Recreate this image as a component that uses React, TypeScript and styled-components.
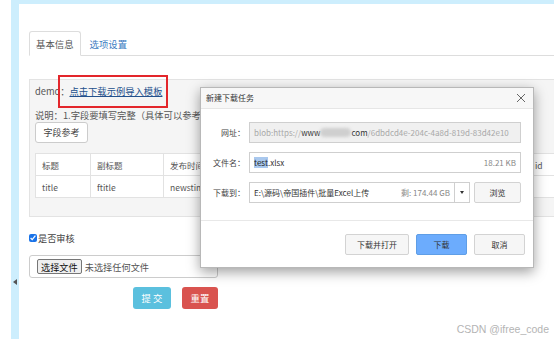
import React from "react";
import styled, { createGlobalStyle } from "styled-components";

const GlobalStyle = createGlobalStyle`
  html, body {
    margin: 0;
    padding: 0;
    background: #fff;
    overflow: hidden;
  }
  body {
    font-family: "Noto Sans CJK SC", "Noto Sans", "Liberation Sans", sans-serif;
    color: #555;
  }
`;

const cjk = `"Noto Sans CJK SC", "Noto Sans", "Liberation Sans", sans-serif`;

const Page = styled.div`
  position: relative;
  width: 554px;
  height: 339px;
  overflow: hidden;
  padding-left: 11px;
  box-sizing: border-box;
  display: flex;
`;

const Frame = styled.div`
  position: relative;
  flex: 1;
  display: flex;
  min-width: 0;
  background: #cdeefd;
  padding: 4px 0 0 8px;
`;

const Toggle = styled.span`
  position: absolute;
  left: 2px;
  top: 279px;
  width: 0;
  height: 0;
  border-top: 3px solid transparent;
  border-bottom: 3px solid transparent;
  border-right: 4px solid #555;
`;

const Content = styled.main`
  flex: 1;
  min-width: 0;
  background: #fff;
  padding: 27px 0 0 10px;
`;

const Tabs = styled.div`
  display: flex;
  height: 24px;
  border-bottom: 1px solid #ddd;
  margin-right: -40px;
`;

const Tab = styled.div<{ $active?: boolean }>`
  height: 25px;
  line-height: 24px;
  padding: 0 6px;
  margin-right: 2px;
  font-size: 9.4px;
  color: ${(p) => (p.$active ? "#555" : "#3a7bbf")};
  border: 1px solid ${(p) => (p.$active ? "#ddd" : "transparent")};
  border-bottom-color: ${(p) => (p.$active ? "#fff" : "transparent")};
  border-radius: 3px 3px 0 0;
  background: ${(p) => (p.$active ? "#fff" : "transparent")};
  box-sizing: border-box;
`;

const Panel = styled.section`
  margin-top: 23px;
  margin-right: -60px;
  background: #f5f5f5;
  border: 1px solid #e3e3e3;
  padding: 0 5px 18px;
`;

const DemoLine = styled.div`
  line-height: 22px;
  font-size: 9.3px;
  color: #555;
`;

const DemoLink = styled.a`
  position: relative;
  color: #23508c;
  text-decoration: underline;
  &::after {
    content: "";
    position: absolute;
    left: -11px;
    right: -6px;
    top: -9px;
    bottom: -10px;
    border: 2px solid #e3262b;
  }
`;

const Note = styled.div`
  margin-top: 6px;
  line-height: 14px;
  font-size: 9.3px;
  white-space: nowrap;
`;

const PlainButton = styled.button`
  display: block;
  width: 53px;
  height: 21px;
  padding: 0;
  border: 1px solid #ccc;
  border-radius: 3px;
  background: #fff;
  color: #444;
  font-family: ${cjk};
  font-size: 9px;
`;

const Table = styled.table`
  margin-top: 10px;
  border-collapse: collapse;
  background: #fff;
  table-layout: fixed;
`;

const Cell = styled.td<{ $w?: number }>`
  width: ${(p) => (p.$w ? `${p.$w}px` : "auto")};
  height: 22px;
  padding: 0 6px;
  border: 1px solid #e2e2e2;
  font-size: 8.5px;
  color: #555;
  white-space: nowrap;
  overflow: hidden;
  box-sizing: border-box;
`;

const CheckRow = styled.label`
  display: flex;
  align-items: center;
  margin-top: 13px;
  height: 16px;
  font-size: 9.2px;
  color: #444;
`;

const Check = styled.input`
  width: 8px;
  height: 8px;
  margin: 0 1px 0 0;
  accent-color: #1a73e8;
`;

const FileBox = styled.div`
  margin-top: 9px;
  width: 189px;
  height: 23px;
  box-sizing: border-box;
  border: 1px solid #ccc;
  border-radius: 3px;
  background: #fff;
  display: flex;
  align-items: center;
  padding-left: 7px;
  gap: 3px;
  font-size: 9.2px;
  color: #555;
`;

const FileButton = styled.span`
  height: 15px;
  line-height: 14px;
  padding: 0 3px;
  box-sizing: border-box;
  border: 1px solid #767676;
  border-radius: 2px;
  background: #efefef;
  color: #111;
`;

const Actions = styled.div`
  display: flex;
  gap: 11px;
  margin-top: 9px;
  padding-left: 104px;
`;

const SolidButton = styled.button<{ $bg: string; $w: number }>`
  height: 22px;
  width: ${(p) => p.$w}px;
  padding: 0;
  border: none;
  border-radius: 3px;
  background: ${(p) => p.$bg};
  color: #fff;
  font-family: ${cjk};
  font-size: 9.4px;
`;

/* download dialog */
const Dialog = styled.div`
  position: absolute;
  left: 200px;
  top: 87px;
  width: 334px;
  height: 181px;
  box-sizing: border-box;
  background: #fff;
  border: 1px solid #b8b8b8;
  box-shadow: 0 4px 12px rgba(0, 0, 0, 0.38);
  display: flex;
  flex-direction: column;
  font-size: 8px;
  color: #333;
`;

const TitleBar = styled.div`
  position: relative;
  height: 21px;
  line-height: 20px;
  padding-left: 5px;
  box-sizing: border-box;
  background: #f7f7f7;
  border-bottom: 1px solid #e6e6e6;
  color: #333;
`;

const Close = styled.svg`
  position: absolute;
  right: 7px;
  top: 5px;
`;

const DialogBody = styled.div`
  display: flex;
  flex-direction: column;
  gap: 9px;
  padding: 13px 12px 0 0;
`;

const Row = styled.div`
  display: flex;
  align-items: center;
  height: 21px;
`;

const Label = styled.span`
  width: 44px;
  text-align: right;
  margin-right: 4px;
  color: #444;
`;

const Field = styled.div<{ $disabled?: boolean }>`
  flex: 1;
  min-width: 0;
  height: 21px;
  box-sizing: border-box;
  border: 1px solid #cfcfcf;
  background: ${(p) => (p.$disabled ? "#f0f0f0" : "#fff")};
  display: flex;
  align-items: center;
  padding: 0 4px;
  white-space: nowrap;
  overflow: hidden;
`;

const Muted = styled.span`
  color: #a8a8a8;
`;

const Dark = styled.span`
  color: #333;
`;

const Blur = styled.span`
  display: inline-block;
  width: 31px;
  height: 9px;
  border-radius: 5px;
  background: #cfcfcf;
  filter: blur(1.5px);
`;

const Selected = styled.span`
  background: #a9c8ee;
  color: #222;
`;

const Side = styled.span`
  margin-left: auto;
  color: #888;
`;

const Drop = styled.div`
  width: 15px;
  height: 21px;
  box-sizing: border-box;
  border: 1px solid #cfcfcf;
  border-left: none;
  margin-right: 4px;
  display: flex;
  align-items: center;
  justify-content: center;
  &::before {
    content: "";
    border-left: 2.5px solid transparent;
    border-right: 2.5px solid transparent;
    border-top: 3px solid #333;
  }
`;

const GreyButton = styled.button<{ $w: number; $primary?: boolean }>`
  width: ${(p) => p.$w}px;
  height: 21px;
  padding: 0;
  box-sizing: border-box;
  border: 1px solid ${(p) => (p.$primary ? "#5f9ee6" : "#d3d3d3")};
  border-radius: 2px;
  background: ${(p) => (p.$primary ? "#6cacfd" : "#f6f6f6")};
  color: #333;
  font-family: ${cjk};
  font-size: 8px;
`;

const Footer = styled.div`
  margin-top: auto;
  height: 47px;
  box-sizing: border-box;
  border-top: 1px solid #e8e8e8;
  display: flex;
  justify-content: flex-end;
  align-items: flex-start;
  gap: 7px;
  padding: 13px 8px 0 0;
`;

const Watermark = styled.div`
  position: absolute;
  right: 5px;
  bottom: 4px;
  font-family: "Liberation Sans", Arial, sans-serif;
  font-size: 10.5px;
  color: #b4b4b4;
`;

const headers = ["标题", "副标题", "发布时间", "", "", "", "", "id"];
const values = ["title", "ftitle", "newstime", "", "", "", "", ""];
const widths = [55, 73, 73, 73, 73, 73, 73, 73];

export default function App() {
  return (
    <>
      <GlobalStyle />
      <Page>
        <Frame>
          <Toggle />
          <Content>
            <Tabs>
              <Tab $active>基本信息</Tab>
              <Tab>选项设置</Tab>
            </Tabs>
            <Panel>
              <DemoLine>
                demo：<DemoLink>点击下载示例导入模板</DemoLink>
              </DemoLine>
              <Note>说明：1.字段要填写完整（具体可以参考</Note>
              <PlainButton>字段参考</PlainButton>
              <Table>
                <tbody>
                  <tr>
                    {headers.map((h, i) => (
                      <Cell key={i} $w={widths[i]}>{h}</Cell>
                    ))}
                  </tr>
                  <tr>
                    {values.map((v, i) => (
                      <Cell key={i} $w={widths[i]}>{v}</Cell>
                    ))}
                  </tr>
                </tbody>
              </Table>
            </Panel>
            <CheckRow>
              <Check type="checkbox" defaultChecked />
              是否审核
            </CheckRow>
            <FileBox>
              <FileButton>选择文件</FileButton>
              未选择任何文件
            </FileBox>
            <Actions>
              <SolidButton $bg="#5bc0de" $w={38}>提 交</SolidButton>
              <SolidButton $bg="#d9534f" $w={36}>重置</SolidButton>
            </Actions>
          </Content>
        </Frame>

        <Dialog>
          <TitleBar>
            新建下载任务
            <Close width="10" height="10" viewBox="0 0 10 10">
              <path d="M1 1 L9 9 M9 1 L1 9" stroke="#666" strokeWidth="1" fill="none" />
            </Close>
          </TitleBar>
          <DialogBody>
            <Row>
              <Label>网址：</Label>
              <Field $disabled>
                <Muted>blob:https://</Muted>
                <Dark>www</Dark>
                <Blur />
                <Dark>com</Dark>
                <Muted>/6dbdcd4e-204c-4a8d-819d-83d42e10</Muted>
              </Field>
            </Row>
            <Row>
              <Label>文件名：</Label>
              <Field>
                <Selected>test</Selected>
                <Dark>.xlsx</Dark>
                <Side>18.21 KB</Side>
              </Field>
            </Row>
            <Row>
              <Label>下载到：</Label>
              <Field>
                <Dark>E:\源码\帝国插件\批量Excel上传</Dark>
                <Side>剩: 174.44 GB</Side>
              </Field>
              <Drop />
              <GreyButton $w={47}>浏览</GreyButton>
            </Row>
          </DialogBody>
          <Footer>
            <GreyButton $w={64}>下载并打开</GreyButton>
            <GreyButton $w={51} $primary>下载</GreyButton>
            <GreyButton $w={51}>取消</GreyButton>
          </Footer>
        </Dialog>

        <Watermark>CSDN @ifree_code</Watermark>
      </Page>
    </>
  );
}
